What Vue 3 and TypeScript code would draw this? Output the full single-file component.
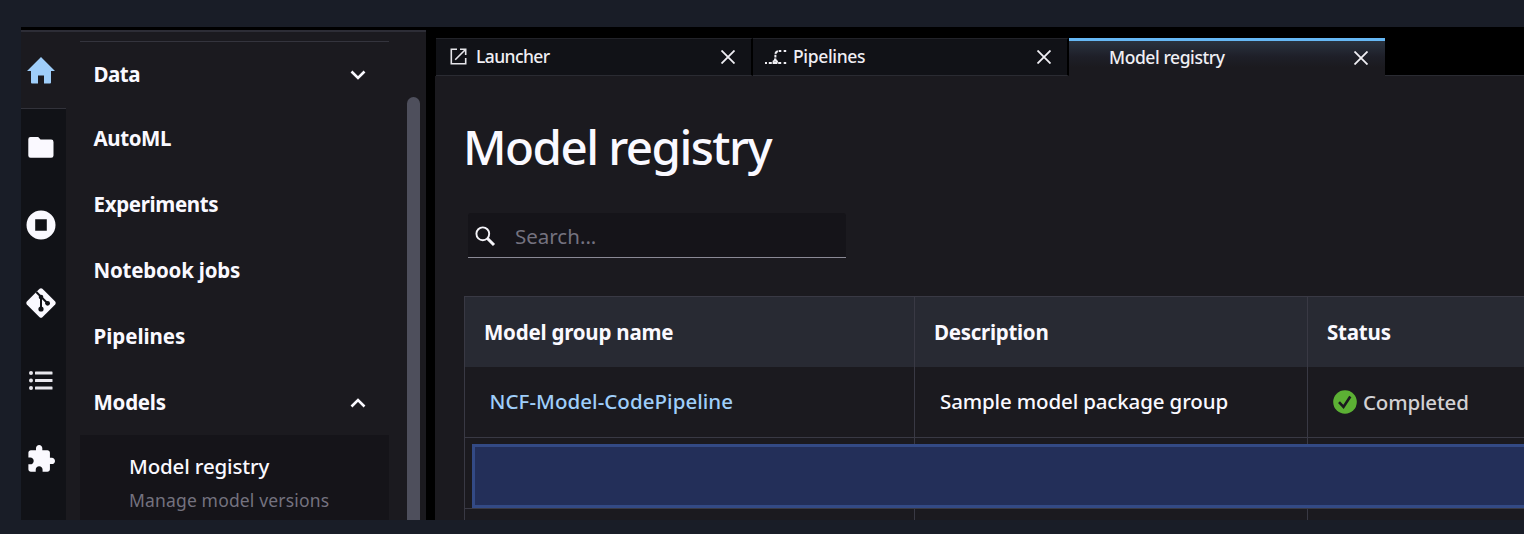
<script setup lang="ts">
interface NavItem { label: string; cls: string; chevron?: 'down' | 'up' }

const nav: NavItem[] = [
  { label: 'Data', cls: 'n-data', chevron: 'down' },
  { label: 'AutoML', cls: 'n-automl' },
  { label: 'Experiments', cls: 'n-exp' },
  { label: 'Notebook jobs', cls: 'n-jobs' },
  { label: 'Pipelines', cls: 'n-pipe' },
  { label: 'Models', cls: 'n-models', chevron: 'up' },
]
</script>

<template>
  <div class="page">
    <div class="app">
      <aside class="side">
        <div class="rail">
          <div class="rail-item home">
            <svg width="28" height="27" viewBox="0 0 28 27"><path fill="#9fcefa" d="M14 0 28 14H24V25.500Q24 26.500 23 26.500H17V18.500H11V26.500H5Q4 26.500 4 25.500V14H0Z" /></svg>
          </div>
          <div class="rail-item">
            <svg width="26" height="21" viewBox="0 0 26 21"><path fill="#faf9ff" d="M2.500 0H10.200L12.500 2.600H23.200Q25.500 2.600 25.500 5V18.500Q25.500 20.700 23.200 20.700H2.500Q.300 20.700.300 18.500V2.300Q.300 0 2.500 0Z" /></svg>
          </div>
          <div class="rail-item">
            <svg width="30" height="30" viewBox="0 0 30 30"><path fill="#faf9ff" fill-rule="evenodd" d="M15 .500A14.500 14.500 0 1 1 15 29.500 14.500 14.500 0 0 1 15 .500ZM9.200 9.200V20.800H20.800V9.200Z" /></svg>
          </div>
          <div class="rail-item">
            <svg width="30" height="30" viewBox="0 0 30 30"><path fill="#faf9ff" d="M13.600.800Q15 -.200 16.400.800L29.200 13.600Q30.200 15 29.200 16.400L16.400 29.200Q15 30.200 13.600 29.200L.800 16.400Q-.200 15 .800 13.600Z" /><g stroke="#111217" stroke-width="2" fill="none"><path d="M10.300 4 15 8.700V20.500M15 8.700 21.500 15.200" /></g><g fill="#111217"><circle cx="15" cy="9" r="2.300" /><circle cx="15" cy="21" r="2.600" /><circle cx="21.600" cy="15.300" r="2.400" /></g></svg>
          </div>
          <div class="rail-item">
            <svg width="24" height="20" viewBox="0 0 24 20" fill="#e8e7ed"><circle cx="2" cy="2" r="2" /><circle cx="2" cy="9.500" r="2" /><circle cx="2" cy="17" r="2" /><rect x="6" y=".500" width="17.500" height="3" rx=".600" /><rect x="6" y="8" width="17.500" height="3" rx=".600" /><rect x="6" y="15.500" width="17.500" height="3" rx=".600" /></svg>
          </div>
          <div class="rail-item">
            <svg width="27" height="27" viewBox="1.700 1.200 21.300 20.800"><path fill="#faf9ff" d="M20.500 11H19V7c0-1.100-.9-2-2-2h-4V3.500C13 2.120 11.880 1 10.500 1S8 2.120 8 3.500V5H4c-1.100 0-1.990.9-1.990 2v3.800H3.500c1.490 0 2.700 1.210 2.700 2.700s-1.210 2.700-2.700 2.700H2V20c0 1.100.9 2 2 2h3.800v-1.500c0-1.490 1.210-2.700 2.700-2.700 1.490 0 2.700 1.210 2.700 2.700V22H17c1.100 0 2-.9 2-2v-4h1.500c1.380 0 2.500-1.120 2.500-2.500S21.880 11 20.500 11z" /></svg>
          </div>
        </div>
        <nav class="nav">
          <div v-for="item in nav" :key="item.label" class="nav-item">
            <span class="t" :class="item.cls">{{ item.label }}</span>
            <svg v-if="item.chevron" class="chev" :class="item.chevron" width="16" height="10" viewBox="0 0 16 10"><path d="M1.500 1.500 8 8 14.500 1.500" fill="none" stroke="#faf9ff" stroke-width="2.600" /></svg>
          </div>
          <div class="sub">
            <div class="sub-title"><span class="t n-sub">Model registry</span></div>
            <div class="sub-note"><span class="t n-note">Manage model versions</span></div>
          </div>
        </nav>
        <div class="track"><div class="thumb"></div></div>
      </aside>

      <main class="main">
        <div class="tabs">
          <div class="tab launcher">
            <svg class="tab-icon" width="17" height="17" viewBox="0 0 17 17" fill="none" stroke="#e6e5ea" stroke-width="1.600"><path d="M7 1.300H1.300V15.700H15.700V10M10 1.300H15.700V7M15.200 1.800 5.200 11.800" /></svg>
            <span class="t t-launch">Launcher</span>
            <svg class="close" width="14" height="14" viewBox="0 0 14 14"><path d="M.500.500 13.500 13.500M13.500.500.500 13.500" stroke="#f0eff4" stroke-width="1.800" /></svg>
          </div>
          <div class="tab pipelines">
            <svg class="tab-icon" width="22" height="16" viewBox="0 0 22 16" fill="none" stroke="#f0eff4" stroke-width="2.200"><path d="M0 14H2M3.800 14H6.800M7.600 14H12.400M13.200 14H16.200M18.700 14H21.200M18.700 2H21.200M13.700 2H16.300" /><path d="M12.900 2.200Q10.700 2.600 10.500 4.800M10.400 5.800V8.400M10.400 9.400Q10.200 12 7.800 13M10.500 10.500Q10.800 12.300 12.800 13" stroke-width="2" /></svg>
            <span class="t t-pipe">Pipelines</span>
            <svg class="close" width="14" height="14" viewBox="0 0 14 14"><path d="M.500.500 13.500 13.500M13.500.500.500 13.500" stroke="#f0eff4" stroke-width="1.800" /></svg>
          </div>
          <div class="tab active">
            <span class="t t-model">Model registry</span>
            <svg class="close" width="14" height="14" viewBox="0 0 14 14"><path d="M.500.500 13.500 13.500M13.500.500.500 13.500" stroke="#f0eff4" stroke-width="1.800" /></svg>
          </div>
          <div class="tab-rest"></div>
        </div>
        <section class="content">
          <h1><span class="t h-title">Model registry</span></h1>
          <div class="search">
            <svg width="21" height="21" viewBox="0 0 21 21" fill="none" stroke="#f5f4f9"><circle cx="7.800" cy="7.800" r="6.400" stroke-width="1.900" /><path d="M12.500 12.500 19 19" stroke-width="3" /></svg>
            <span class="t s-hint">Search...</span>
          </div>
          <div class="table">
            <div class="row head">
              <div class="cell"><span class="t c-name">Model group name</span></div>
              <div class="cell"><span class="t c-desc">Description</span></div>
              <div class="cell"><span class="t c-status">Status</span></div>
            </div>
            <div class="row body">
              <div class="cell"><span class="t link">NCF-Model-CodePipeline</span></div>
              <div class="cell"><span class="t desc">Sample model package group</span></div>
              <div class="cell status">
                <svg width="24" height="24" viewBox="0 0 24 24"><circle cx="12" cy="12" r="11.800" fill="#5cb034" /><path d="M6 12.200 10.500 17 17.300 6.500" fill="none" stroke="#1b1a1f" stroke-width="2.600" /></svg>
                <span class="t done">Completed</span>
              </div>
            </div>
            <div class="row body">
              <div class="cell"></div><div class="cell"></div><div class="cell"></div>
              <div class="mask"></div>
            </div>
            <div class="row body">
              <div class="cell"></div><div class="cell"></div><div class="cell"></div>
            </div>
          </div>
        </section>
      </main>
    </div>
  </div>
</template>

<style>
body { margin: 0; background: #191d27; overflow: hidden; }
</style>

<style scoped>
* { box-sizing: border-box; }
.page { width: 1524px; height: 534px; padding: 27px 0 14px 21px; background: #191d27; font-family: "Noto Sans", "Open Sans", sans-serif; color: #faf9ff; overflow: hidden; }
.app { display: flex; height: 493px; background: #000; overflow: hidden; }
svg { display: block; flex: none; }
.t { white-space: nowrap; }
.side { display: flex; width: 405px; height: 490px; margin-top: 3px; background: #1b1a1f; border-top: 2px solid #2d2d36; overflow: hidden; }
.rail { width: 45px; flex: none; background: #111217; }
.rail-item { display: flex; align-items: center; justify-content: center; width: 40.400px; height: 77.600px; }
.rail-item.home { width: 45px; height: 77px; padding-right: 4.600px; background: #1b1a1f; border-bottom: 1px solid #32323a; }
.nav { width: 309px; margin: 9px 0 0 14px; flex: none; border-top: 1px solid #34343d; }
.nav-item { display: flex; align-items: center; justify-content: space-between; height: 66px; padding: 0 23px 0 13.500px; font-size: 20.500px; font-weight: 700; line-height: 28px; }
.nav-item .t { margin-top: -2px; }
.nav-item:first-child { height: 64px; padding-top: 1px; }
.n-data { letter-spacing: -.5px; }
.n-automl { letter-spacing: -.42px; }
.n-exp { letter-spacing: -.34px; }
.n-jobs { letter-spacing: -.22px; }
.n-pipe { letter-spacing: -.04px; }
.n-models { letter-spacing: -.25px; }
.n-sub { letter-spacing: -.15px; }
.n-note { letter-spacing: .16px; }
.chev.up { transform: rotate(180deg); }
.sub { height: 90px; padding: 17px 0 0 49px; margin-top: -1px; background: #151419; }
.sub-title { font-size: 20.500px; line-height: 28px; font-weight: 500; }
.sub-note { margin-top: 8px; font-size: 17.500px; line-height: 24px; color: #74727f; }
.track { width: 13px; margin: 65px 0 0 18px; }
.thumb { height: 440px; background: #4e4f5c; border-radius: 7px 7px 0 0; }
.main { width: 1089px; flex: none; margin: 11px 0 0 9px; background: #000; }
.tabs { display: flex; height: 38px; padding-left: 1px; }
.tab { display: flex; align-items: center; width: 317px; height: 38px; padding: 0 16px 1px 14px; background: #111217; border-top: 1px solid #222329; border-bottom: 1px solid #2a2b32; border-right: 2px solid #000; font-size: 17.500px; font-weight: 500; color: #f0eff4; }
.tab .t { margin-top: -2px; }
.close { margin-left: auto; }
.tab-icon { margin-right: 9px; }
.tab.pipelines { width: 316px; padding-left: 12px; }
.pipelines .tab-icon { margin-right: 6px; }
.t-launch { letter-spacing: -.6px; }
.t-pipe { letter-spacing: -.35px; }
.t-model { letter-spacing: -.42px; }
.tab.active { width: 316px; padding: 0 17px 1px 40px; background: linear-gradient(#2a3340, #1e1f28 45%, #1b1a1f 75%); border: 0; border-top: 3px solid #66b8f5; }
.tab-rest { flex: 1; border-bottom: 1px solid #2a2b32; }
.content { height: 446px; padding: 42px 0 0 29px; background: #1b1a1f; }
h1 { margin: 0 0 0 -1px; height: 60px; line-height: 58px; font-size: 47.500px; font-weight: 500; letter-spacing: -1.550px; }
.search { display: flex; align-items: center; width: 378px; height: 45px; margin: 35px 0 0 4px; padding: 2px 0 0 7px; gap: 19px; background: #151419; border-bottom: 1px solid #8a8995; font-size: 20.500px; color: #74727f; border-radius: 3px 3px 0 0; }
.table { width: 1100px; margin-top: 38px; border: 1px solid #393944; border-width: 1px 0 0 1px; }
.row { display: flex; position: relative; }
.cell { display: flex; align-items: center; width: 393px; flex: none; padding-left: 19px; border-left: 1px solid #393944; font-size: 20.500px; }
.cell:first-child { width: 449px; padding-left: 19px; border-left: 0; }
.head .cell { height: 70px; background: #282a33; font-weight: 700; }
.body .cell { height: 71px; border-bottom: 1px solid #393944; padding-left: 25px; font-weight: 500; }
.body .cell:first-child { padding-left: 24.500px; }
.c-name { letter-spacing: -.22px; }
.c-desc { letter-spacing: -.28px; }
.c-status { letter-spacing: -.2px; }
.link { margin-top: -2px; color: #9fcefa; letter-spacing: .05px; }
.desc { margin-top: -2px; letter-spacing: -.14px; }
.done { letter-spacing: -.18px; }
.status { gap: 6px; color: #d2d1d4; }
.mask { position: absolute; left: 7px; top: 6px; width: 1100px; height: 64px; background: #232f59; border: 3px solid #334a85; }
</style>
